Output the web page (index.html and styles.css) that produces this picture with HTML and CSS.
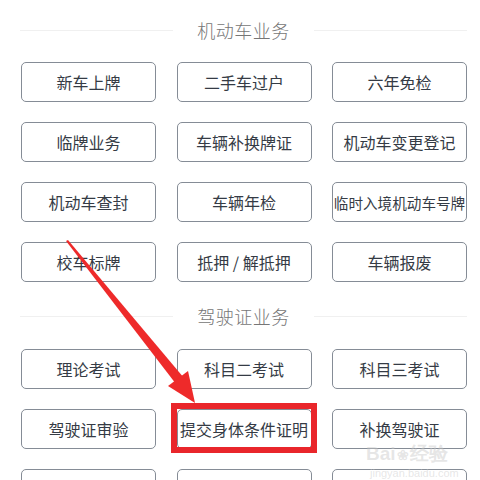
FILE: index.html
```html
<!DOCTYPE html>
<html lang="zh">
<head>
<meta charset="utf-8">
<link rel="stylesheet" href="styles.css">
</head>
<body>
<div class="page">
  <div class="section-title"><span class="line"></span><span class="label">机动车业务</span><span class="line"></span></div>
  <div class="grid">
    <div class="btn">新车上牌</div>
    <div class="btn">二手车过户</div>
    <div class="btn">六年免检</div>
    <div class="btn">临牌业务</div>
    <div class="btn">车辆补换牌证</div>
    <div class="btn">机动车变更登记</div>
    <div class="btn">机动车查封</div>
    <div class="btn">车辆年检</div>
    <div class="btn btn-long">临时入境机动车号牌</div>
    <div class="btn">校车标牌</div>
    <div class="btn">抵押 / 解抵押</div>
    <div class="btn">车辆报废</div>
  </div>
  <div class="section-title second"><span class="line"></span><span class="label">驾驶证业务</span><span class="line"></span></div>
  <div class="grid">
    <div class="btn">理论考试</div>
    <div class="btn">科目二考试</div>
    <div class="btn">科目三考试</div>
    <div class="btn">驾驶证审验</div>
    <div class="btn">提交身体条件证明</div>
    <div class="btn">补换驾驶证</div>
    <div class="btn"></div>
    <div class="btn"></div>
    <div class="btn"></div>
  </div>

  <div class="highlight"></div>
  <svg class="arrow" width="480" height="480" viewBox="0 0 480 480">
    <polygon points="66,241 68,240 184,378 176,384" fill="#ee2a2a"/>
    <polygon points="195,403 168,386 188,371" fill="#ee2a2a"/>
  </svg>
  <div class="watermark">
    <div class="wm-top">Bai<span class="paw">❀</span>经验</div>
    <div class="wm-bottom">jingyan.baidu.com</div>
  </div>
</div>
</body>
</html>
```
FILE: styles.css
```css
html, body {
  margin: 0;
  padding: 0;
  background: #ffffff;
}
body {
  font-family: "Noto Sans CJK SC", "Noto Sans", sans-serif;
  overflow: hidden;
}
.page {
  position: relative;
  width: 480px;
  height: 480px;
  overflow: hidden;
  padding: 18px 13px 0 21px;
  box-sizing: border-box;
}
.section-title {
  display: flex;
  align-items: center;
  height: 24px;
  margin: 0 0 20px -1px;
  gap: 24px;
}
.section-title.second {
  margin-top: 22px;
  margin-bottom: 21px;
}
.line {
  flex: 1;
  height: 1px;
  background: #f0f0f0;
}
.label {
  font-size: 18px;
  line-height: 24px;
  color: #767676;
  font-weight: 300;
  letter-spacing: 0.5px;
}
.grid {
  display: grid;
  grid-template-columns: repeat(3, 135px);
  column-gap: 20.5px;
  row-gap: 20px;
}
.btn {
  height: 40px;
  box-sizing: border-box;
  border: 1.5px solid #858c96;
  border-radius: 5px;
  display: flex;
  align-items: center;
  justify-content: center;
  font-size: 16px;
  color: #353b45;
  white-space: nowrap;
  background: #fff;
}
.btn-long {
  font-size: 14.6px;
}
.highlight {
  position: absolute;
  left: 171px;
  top: 403px;
  width: 146px;
  height: 50px;
  box-sizing: border-box;
  border: 6px solid #e9262b;
}
.arrow {
  position: absolute;
  left: 0;
  top: 0;
}
.watermark {
  position: absolute;
  left: 366px;
  top: 443px;
  color: rgba(200, 200, 200, 0.45);
  font-family: "Liberation Sans", sans-serif;
}
.wm-top {
  font-size: 19px;
  font-weight: bold;
  line-height: 22px;
}
.paw {
  font-size: 14px;
  margin: 0 1px;
}
.wm-bottom {
  font-size: 11px;
  line-height: 14px;
  margin-left: 4px;
}
```
